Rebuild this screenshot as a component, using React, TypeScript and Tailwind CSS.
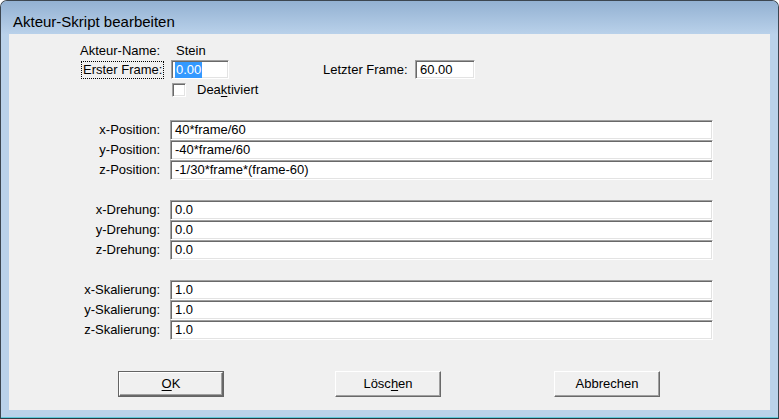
import React from "react";

const sunken =
  "border border-[#a0a0a0] border-b-white border-r-white shadow-[inset_1px_1px_0_#696969,inset_-1px_-1px_0_#e3e3e3] bg-white";

function Field({ value, className = "" }: { value: string; className?: string }) {
  return (
    <div className={`${sunken} flex h-[20px] items-center pl-[4px] leading-[16px] ${className}`}>
      {value}
    </div>
  );
}

function Group({ rows, className = "" }: { rows: [string, string][]; className?: string }) {
  return (
    <div className={`grid grid-cols-[151px_543px] gap-x-[10px] ${className}`}>
      {rows.map(([label, value]) => (
        <React.Fragment key={label}>
          <div className="flex h-[20px] items-center justify-end leading-[16px]">{label}</div>
          <Field value={value} />
        </React.Fragment>
      ))}
    </div>
  );
}

function Button({
  children,
  isDefault,
  className = "",
}: {
  children: React.ReactNode;
  isDefault?: boolean;
  className?: string;
}) {
  const inner =
    "flex items-center justify-center border border-t-white border-l-white border-b-[#696969] border-r-[#696969] shadow-[inset_-1px_-1px_0_#a0a0a0] bg-[#f0f0f0] leading-[16px]";
  if (isDefault) {
    return (
      <div className={`h-[26px] w-[106px] border border-[#646464] ${className}`}>
        <div className={`${inner} h-full w-full`}>{children}</div>
      </div>
    );
  }
  return <div className={`${inner} h-[26px] w-[106px] ${className}`}>{children}</div>;
}

export default function App() {
  return (
    <div className="h-[419px] w-[779px] bg-white font-['Liberation_Sans',Arial,sans-serif] text-[13px] text-black">
      <div className="flex h-full flex-col rounded-t-[7px] border border-[#3c4650] border-b-[#2b3a44] bg-[#bad2ea] shadow-[inset_0_-1px_0_#5fc8d8]">
        {/* Title bar */}
        <div className="h-[33px] shrink-0 rounded-t-[6px] bg-gradient-to-b from-[#93b1d2] to-[#b9d1ea] pl-[12px] pt-[12px] text-[15px] leading-[18px]">
          Akteur-Skript bearbeiten
        </div>

        {/* Client area */}
        <div className="mx-[8px] h-[376px] shrink-0 bg-[#f0f0f0]">
          {/* Akteur-Name */}
          <div className="mt-[9px] flex h-[16px] items-center pl-[71px] leading-[16px]">
            <span className="w-[96px]">Akteur-Name:</span>
            <span>Stein</span>
          </div>

          {/* Frames */}
          <div className="mt-[1px] flex h-[19px] items-center">
            <div className="ml-[72px] flex h-[18px] w-[83px] items-center border border-dotted border-black pl-[1px] leading-[16px]">
              Erster Frame:
            </div>
            <div className={`${sunken} ml-[7px] flex h-[19px] w-[58px] items-center pl-[3px] leading-[16px]`}>
              <span className="bg-[#3399ff] px-[1px] text-white">0.00</span>
            </div>
            <span className="ml-[94px] w-[92px] leading-[16px]">Letzter Frame:</span>
            <div className={`${sunken} flex h-[19px] w-[60px] items-center pl-[4px] leading-[16px]`}>
              60.00
            </div>
          </div>

          {/* Checkbox */}
          <div className="mt-[4px] flex h-[14px] items-center">
            <div className={`${sunken} ml-[163px] h-[14px] w-[14px]`} />
            <span className="ml-[11px] leading-[16px]">
              Dea<span className="underline underline-offset-2">k</span>tiviert
            </span>
          </div>

          <Group
            className="mt-[23px]"
            rows={[
              ["x-Position:", "40*frame/60"],
              ["y-Position:", "-40*frame/60"],
              ["z-Position:", "-1/30*frame*(frame-60)"],
            ]}
          />
          <Group
            className="mt-[20px]"
            rows={[
              ["x-Drehung:", "0.0"],
              ["y-Drehung:", "0.0"],
              ["z-Drehung:", "0.0"],
            ]}
          />
          <Group
            className="mt-[20px]"
            rows={[
              ["x-Skalierung:", "1.0"],
              ["y-Skalierung:", "1.0"],
              ["z-Skalierung:", "1.0"],
            ]}
          />

          {/* Buttons */}
          <div className="mt-[31px] flex">
            <Button isDefault className="ml-[109px]">
              <span>
                <span className="underline underline-offset-2">O</span>K
              </span>
            </Button>
            <Button className="ml-[111px]">
              <span>
                Lösc<span className="underline underline-offset-2">h</span>en
              </span>
            </Button>
            <Button className="ml-[113px]">Abbrechen</Button>
          </div>
        </div>
      </div>
    </div>
  );
}
